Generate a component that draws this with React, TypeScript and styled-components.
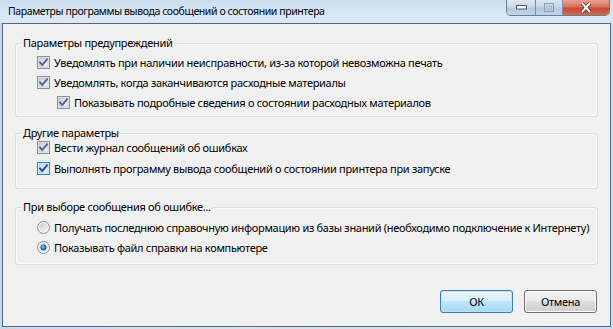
import * as React from 'react';
import styled, { createGlobalStyle } from 'styled-components';

const GlobalStyle = createGlobalStyle`
  html, body {
    margin: 0;
    padding: 0;
    background: #b9d1ea;
  }
  body {
    font-family: "Noto Sans", "Liberation Sans", sans-serif;
    font-size: 11px;
    letter-spacing: -0.3px;
    color: #000;
  }
`;

const Window = styled.div`
  width: 613px;
  height: 329px;
  display: flex;
  flex-direction: column;
  background: linear-gradient(90deg, #c2d8ef 0%, #d4e4f5 40%, #c9dcf1 100%);
  overflow: hidden;
`;

const TitleBar = styled.div`
  height: 23px;
  display: flex;
  align-items: flex-start;
  flex-shrink: 0;
  background: linear-gradient(180deg, #cadcf0 0%, #d9e7f6 60%, #dbe8f6 100%);
`;

const Title = styled.div`
  flex: 1;
  padding: 3px 0 0 8px;
  font-size: 10.5px;
  letter-spacing: -0.4px;
  line-height: 16px;
  white-space: nowrap;
`;

const CaptionGroup = styled.div`
  display: flex;
  margin-right: 3px;
  height: 15px;
  border: 1px solid #6c7c90;
  border-top: none;
  border-radius: 0 0 5px 5px;
  overflow: hidden;
`;

const CaptionButton = styled.div<{ $w: number; $close?: boolean }>`
  width: ${(p) => p.$w}px;
  display: flex;
  align-items: center;
  justify-content: center;
  background: ${(p) =>
    p.$close
      ? 'linear-gradient(180deg, #e8a493 0%, #d7705c 45%, #c74a36 55%, #d16b4f 100%)'
      : 'linear-gradient(180deg, #dde7f2 0%, #c8d7e8 45%, #b5c8dd 55%, #c3d4e6 100%)'};
  & + & {
    border-left: 1px solid #7d8ea2;
  }
`;

const Client = styled.div`
  flex: 1;
  margin: 0 2px 2px 2px;
  border: 1px solid #57687a;
  background: #f0f0f0;
  display: flex;
  flex-direction: column;
  padding: 13px 12px 13px 12px;
`;

const Group = styled.fieldset<{ $bottom: number; $gapTop: number }>`
  margin: ${(p) => p.$gapTop}px 0 0 0;
  padding: 0 0 ${(p) => p.$bottom}px 6px;
  border: 1px solid #d5dfe5;
  border-radius: 3px;
  box-shadow: inset 0 0 0 1px #fbfbfb;
  min-width: 0;
`;

const Legend = styled.legend`
  padding: 0 1px;
  line-height: 12px;
  background: #f0f0f0;
`;

const Rows = styled.div<{ $shift: number; $rowH: number }>`
  margin-top: ${(p) => p.$shift}px;
  padding-left: 15px;
  display: grid;
  grid-auto-rows: ${(p) => p.$rowH}px;
`;

const Row = styled.label<{ $indent?: boolean }>`
  display: flex;
  align-items: center;
  gap: 4px;
  padding-left: ${(p) => (p.$indent ? 20 : 0)}px;
  white-space: nowrap;
  line-height: 15px;
`;

const Buttons = styled.div`
  margin-top: auto;
  display: flex;
  justify-content: flex-end;
  gap: 11px;
  padding-right: 1px;
`;

const Button = styled.button<{ $default?: boolean }>`
  width: 73px;
  height: 23px;
  font: inherit;
  letter-spacing: inherit;
  color: #000;
  border-radius: 3px;
  padding: 0;
  border: 1px solid ${(p) => (p.$default ? '#3c7fb1' : '#707070')};
  background: ${(p) =>
    p.$default
      ? 'linear-gradient(180deg, #eaf6fd 0%, #d9f0fc 45%, #bee6fd 50%, #a7d9f5 100%)'
      : 'linear-gradient(180deg, #f2f2f2 0%, #ebebeb 45%, #dddddd 50%, #cfcfcf 100%)'};
  box-shadow: inset 0 0 0 1px ${(p) => (p.$default ? '#b9e3f9' : '#fcfcfc')};
`;

function CheckBox({ hot }: { hot?: boolean }) {
  const border = hot ? '#3c7fb1' : '#8e8f8f';
  const mark = hot ? '#21468c' : '#4a5f97';
  return (
    <svg width="13" height="13" viewBox="0 0 13 13">
      <defs>
        <linearGradient id={hot ? 'cbh' : 'cbn'} x1="0" y1="0" x2="1" y2="1">
          <stop offset="0" stopColor={hot ? '#bbe0f5' : '#cbcfd5'} />
          <stop offset="1" stopColor={hot ? '#f0f8fd' : '#f6f6f6'} />
        </linearGradient>
      </defs>
      <rect x="0.5" y="0.5" width="12" height="12" fill="#f4f4f4" stroke={border} />
      <rect x="2" y="2" width="9" height="9" fill={`url(#${hot ? 'cbh' : 'cbn'})`} stroke={hot ? '#79c6f9' : '#aeb3b9'} strokeWidth="0.6" />
      <path d="M3 6.4 L5.2 9 L10 3.3" fill="none" stroke={mark} strokeWidth="1.8" strokeLinecap="square" />
    </svg>
  );
}

function Radio({ checked }: { checked?: boolean }) {
  return (
    <svg width="13" height="13" viewBox="0 0 13 13">
      <defs>
        <linearGradient id="rbg" x1="0" y1="0" x2="1" y2="1">
          <stop offset="0" stopColor="#c9ccd1" />
          <stop offset="1" stopColor="#f7f7f7" />
        </linearGradient>
        <radialGradient id="rdot" cx="0.4" cy="0.35" r="0.7">
          <stop offset="0" stopColor="#8fd0f7" />
          <stop offset="0.5" stopColor="#2a82c9" />
          <stop offset="1" stopColor="#1b4f8a" />
        </radialGradient>
      </defs>
      <circle cx="6.5" cy="6.5" r="6" fill="#f4f4f4" stroke="#8e8f8f" />
      <circle cx="6.5" cy="6.5" r="4.2" fill="url(#rbg)" />
      {checked && <circle cx="6.5" cy="6.5" r="2.8" fill="url(#rdot)" stroke="#2b4d7a" strokeWidth="0.5" />}
    </svg>
  );
}

export default function App() {
  return (
    <>
      <GlobalStyle />
      <Window>
        <TitleBar>
          <Title>Параметры программы вывода сообщений о состоянии принтера</Title>
          <CaptionGroup>
            <CaptionButton $w={28}>
              <svg width="11" height="5" viewBox="0 0 11 5">
                <rect x="0.5" y="0.5" width="10" height="3.5" fill="#fff" stroke="#4a5566" />
              </svg>
            </CaptionButton>
            <CaptionButton $w={26}>
              <svg width="10" height="9" viewBox="0 0 10 9">
                <rect x="0.5" y="0.5" width="9" height="8" fill="none" stroke="#8d9bab" />
                <rect x="2.5" y="3" width="5" height="3.5" fill="none" stroke="#a9b6c4" />
              </svg>
            </CaptionButton>
            <CaptionButton $w={46} $close>
              <svg width="14" height="11" viewBox="0 0 14 11">
                <path d="M3 1 L11 10 M11 1 L3 10" stroke="#5a2a22" strokeWidth="3.6" />
                <path d="M3 1 L11 10 M11 1 L3 10" stroke="#fff" strokeWidth="2" />
              </svg>
            </CaptionButton>
          </CaptionGroup>
        </TitleBar>
        <Client>
          <Group $gapTop={0} $bottom={4}>
            <Legend>Параметры предупреждений</Legend>
            <Rows $shift={3} $rowH={20}>
              <Row><CheckBox />Уведомлять при наличии неисправности, из-за которой невозможна печать</Row>
              <Row><CheckBox />Уведомлять, когда заканчиваются расходные материалы</Row>
              <Row $indent><CheckBox />Показывать подробные сведения о состоянии расходных материалов</Row>
            </Rows>
          </Group>
          <Group $gapTop={10} $bottom={9}>
            <Legend>Другие параметры</Legend>
            <Rows $shift={-2} $rowH={21}>
              <Row><CheckBox />Вести журнал сообщений об ошибках</Row>
              <Row><CheckBox hot />Выполнять программу вывода сообщений о состоянии принтера при запуске</Row>
            </Rows>
          </Group>
          <Group $gapTop={12} $bottom={7}>
            <Legend>При выборе сообщения об ошибке...</Legend>
            <Rows $shift={4} $rowH={20}>
              <Row><Radio />Получать последнюю справочную информацию из базы знаний (необходимо подключение к Интернету)</Row>
              <Row><Radio checked />Показывать файл справки на компьютере</Row>
            </Rows>
          </Group>
          <Buttons>
            <Button $default>ОК</Button>
            <Button>Отмена</Button>
          </Buttons>
        </Client>
      </Window>
    </>
  );
}
